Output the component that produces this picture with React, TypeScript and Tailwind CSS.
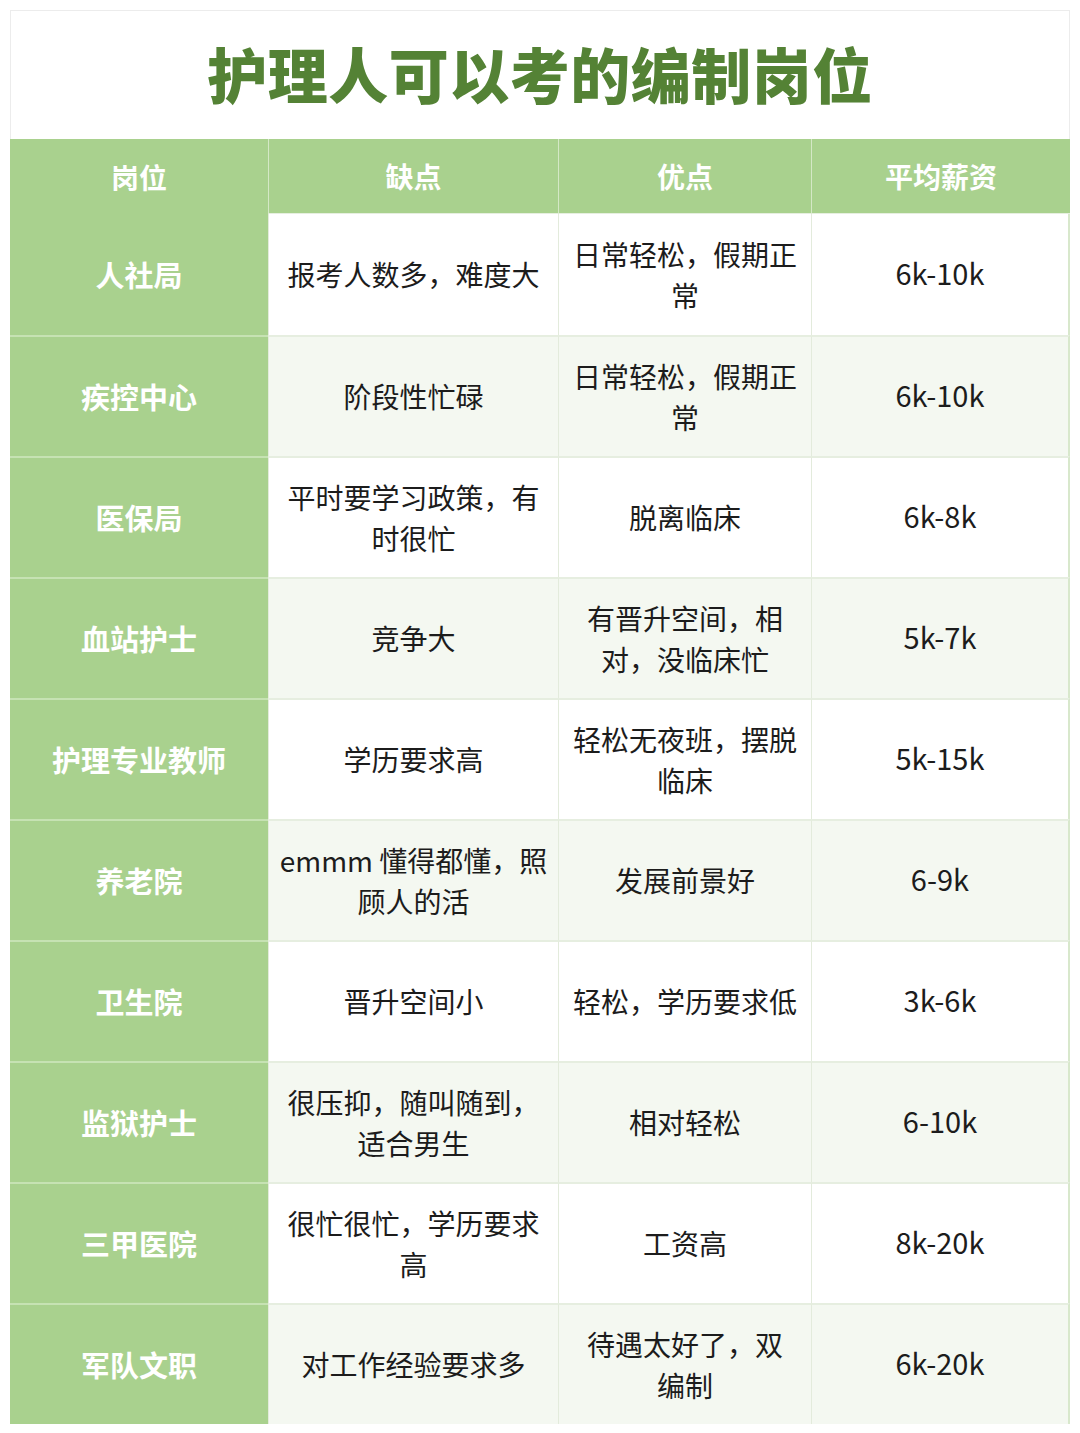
const ROWS: { name: string; cons: string[]; pros: string[]; pay: string }[] = [
  { name: '人社局', cons: ['报考人数多，难度大'], pros: ['日常轻松，假期正', '常'], pay: '6k-10k' },
  { name: '疾控中心', cons: ['阶段性忙碌'], pros: ['日常轻松，假期正', '常'], pay: '6k-10k' },
  { name: '医保局', cons: ['平时要学习政策，有', '时很忙'], pros: ['脱离临床'], pay: '6k-8k' },
  { name: '血站护士', cons: ['竞争大'], pros: ['有晋升空间，相', '对，没临床忙'], pay: '5k-7k' },
  { name: '护理专业教师', cons: ['学历要求高'], pros: ['轻松无夜班，摆脱', '临床'], pay: '5k-15k' },
  { name: '养老院', cons: ['emmm 懂得都懂，照', '顾人的活'], pros: ['发展前景好'], pay: '6-9k' },
  { name: '卫生院', cons: ['晋升空间小'], pros: ['轻松，学历要求低'], pay: '3k-6k' },
  { name: '监狱护士', cons: ['很压抑，随叫随到，', '适合男生'], pros: ['相对轻松'], pay: '6-10k' },
  { name: '三甲医院', cons: ['很忙很忙，学历要求', '高'], pros: ['工资高'], pay: '8k-20k' },
  { name: '军队文职', cons: ['对工作经验要求多'], pros: ['待遇太好了，双', '编制'], pay: '6k-20k' },
];

const HEADERS = ['岗位', '缺点', '优点', '平均薪资'];

function Lines({ lines }: { lines: string[] }) {
  return (
    <div className="text-center">
      {lines.map((l, i) => (
        <div key={i} className="whitespace-nowrap">{l}</div>
      ))}
    </div>
  );
}

export default function App() {
  return (
    <div className="w-[1080px] h-[1433px] bg-white pt-[10px] px-[10px] font-['Noto_Sans_CJK_SC',sans-serif]">
      <div className="w-[1060px]">
        {/* title */}
        <div className="h-[129px] pb-[5px] border-t border-x border-[#ececec] flex items-center justify-center">
          <h1 className="text-[60px] font-black text-[#548235] tracking-[0.5px] leading-none">护理人可以考的编制岗位</h1>
        </div>

        <div className="grid grid-cols-[258px_290px_253px_259px]">
          {HEADERS.map((h, i) => (
            <div
              key={h}
              className={
                'h-[75px] bg-[#a9d18e] flex items-center justify-center text-white text-[28px] font-bold ' +
                (i > 0 ? 'border-l border-[#d4e8c6] border-b border-b-[#e6efe0]' : '')
              }
            >
              {h}
            </div>
          ))}

          {ROWS.map((r, idx) => {
            const bg = idx % 2 === 1 ? 'bg-[#f4f8f1]' : 'bg-white';
            const top = idx > 0;
            return [
              <div
                key={r.name + 'n'}
                className={'h-[121px] bg-[#a9d18e] flex items-center justify-center text-white text-[29px] font-bold ' + (top ? 'border-t-2 border-[#c6e2b3]' : '')}
              >
                {r.name}
              </div>,
              <div
                key={r.name + 'c'}
                className={'h-[121px] flex items-center justify-center text-[28px] leading-[41px] text-[#1c1c1c] border-l border-[#e3ebdc] ' + bg + (top ? ' border-t-2 border-t-[#e6eee0]' : '')}
              >
                <Lines lines={r.cons} />
              </div>,
              <div
                key={r.name + 'p'}
                className={'h-[121px] flex items-center justify-center text-[28px] leading-[41px] text-[#1c1c1c] border-l border-[#e3ebdc] ' + bg + (top ? ' border-t-2 border-t-[#e6eee0]' : '')}
              >
                <Lines lines={r.pros} />
              </div>,
              <div
                key={r.name + 's'}
                className={'h-[121px] pb-[3px] flex items-center justify-center text-[29px] text-[#1c1c1c] border-l border-r-2 border-[#e3ebdc] border-r-[#d8e8cc] ' + bg + (top ? ' border-t-2 border-t-[#e6eee0]' : '')}
              >
                {r.pay}
              </div>,
            ];
          })}
        </div>
      </div>
    </div>
  );
}
